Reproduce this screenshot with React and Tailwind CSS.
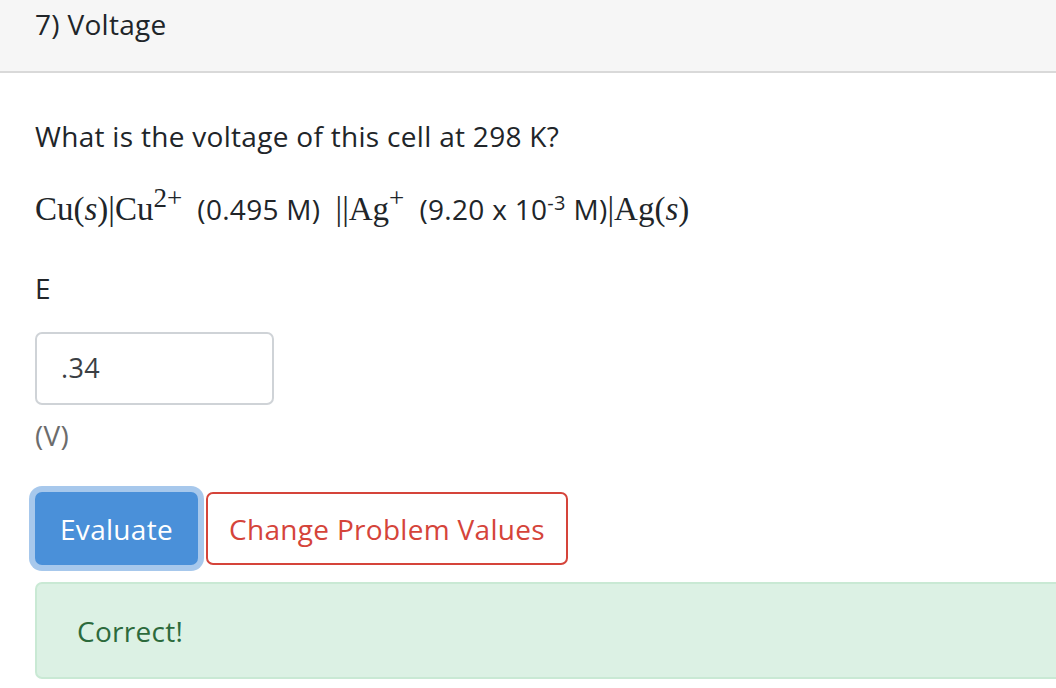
import React from "react";

const sans = { fontFamily: "'Open Sans', Lato, sans-serif", letterSpacing: "0.3px" };
const serif = { fontFamily: "'Liberation Serif', serif", letterSpacing: "0" };

const App = () => {
  return (
    <div className="w-[1056px] h-[688px] overflow-hidden bg-white text-[#212529]" style={sans}>
      {/* Header */}
      <div className="h-[73px] bg-[#f6f6f6] border-b-2 border-[#d9d9d9] px-[35px] pt-[6px]">
        <h2 className="text-[28px] leading-[36px]">7) Voltage</h2>
      </div>

      <div className="pl-[35px]">
        <p className="mt-[47px] text-[28px] leading-[32px]">What is the voltage of this cell at 298 K?</p>

        {/* Cell notation */}
        <div className="mt-[41px] flex items-baseline text-[28px] leading-[32px] whitespace-pre">
          <span className="text-[33px]" style={serif}>
            Cu(<i>s</i>)|Cu<sup className="text-[27px] top-[-0.5em]">2+</sup>
          </span>
          <span>  (0.495 M)  </span>
          <span className="text-[33px]" style={serif}>
            ||Ag<sup className="text-[27px] top-[-0.5em]">+</sup>
          </span>
          <span>  (9.20 x 10<sup className="text-[20px]">-3</sup> M)</span>
          <span className="text-[33px]" style={serif}>
            |Ag(<i>s</i>)
          </span>
        </div>

        <div className="mt-[47px] text-[28px] leading-[32px]">E</div>

        <div className="mt-[28px] w-[239px] h-[73px] border-2 border-[#cfd3d7] rounded-[7px] flex items-center pl-[24px] text-[27px] text-[#3b3f44]">
          .34
        </div>
        <div className="mt-[14px] text-[28px] leading-[32px] text-[#6c6c6c]">(V)</div>

        {/* Buttons */}
        <div className="mt-[41px] flex gap-[8px]">
          <button className="w-[163px] h-[73px] rounded-[7px] bg-[#4a90d9] text-white text-[28px] ring-[6px] ring-[#a7c8ec]">
            Evaluate
          </button>
          <button className="w-[362px] h-[73px] rounded-[7px] border-2 border-[#d5443a] text-[#d5443a] text-[28px] bg-white">
            Change Problem Values
          </button>
        </div>

        {/* Alert */}
        <div className="mt-[17px] w-[1040px] h-[97px] rounded-[7px] bg-[#dcf1e4] border-2 border-[#c9e9d4] flex items-center pl-[40px] text-[28px] text-[#2c6a3c]">
          Correct!
        </div>
      </div>
    </div>
  );
};

export default App;
